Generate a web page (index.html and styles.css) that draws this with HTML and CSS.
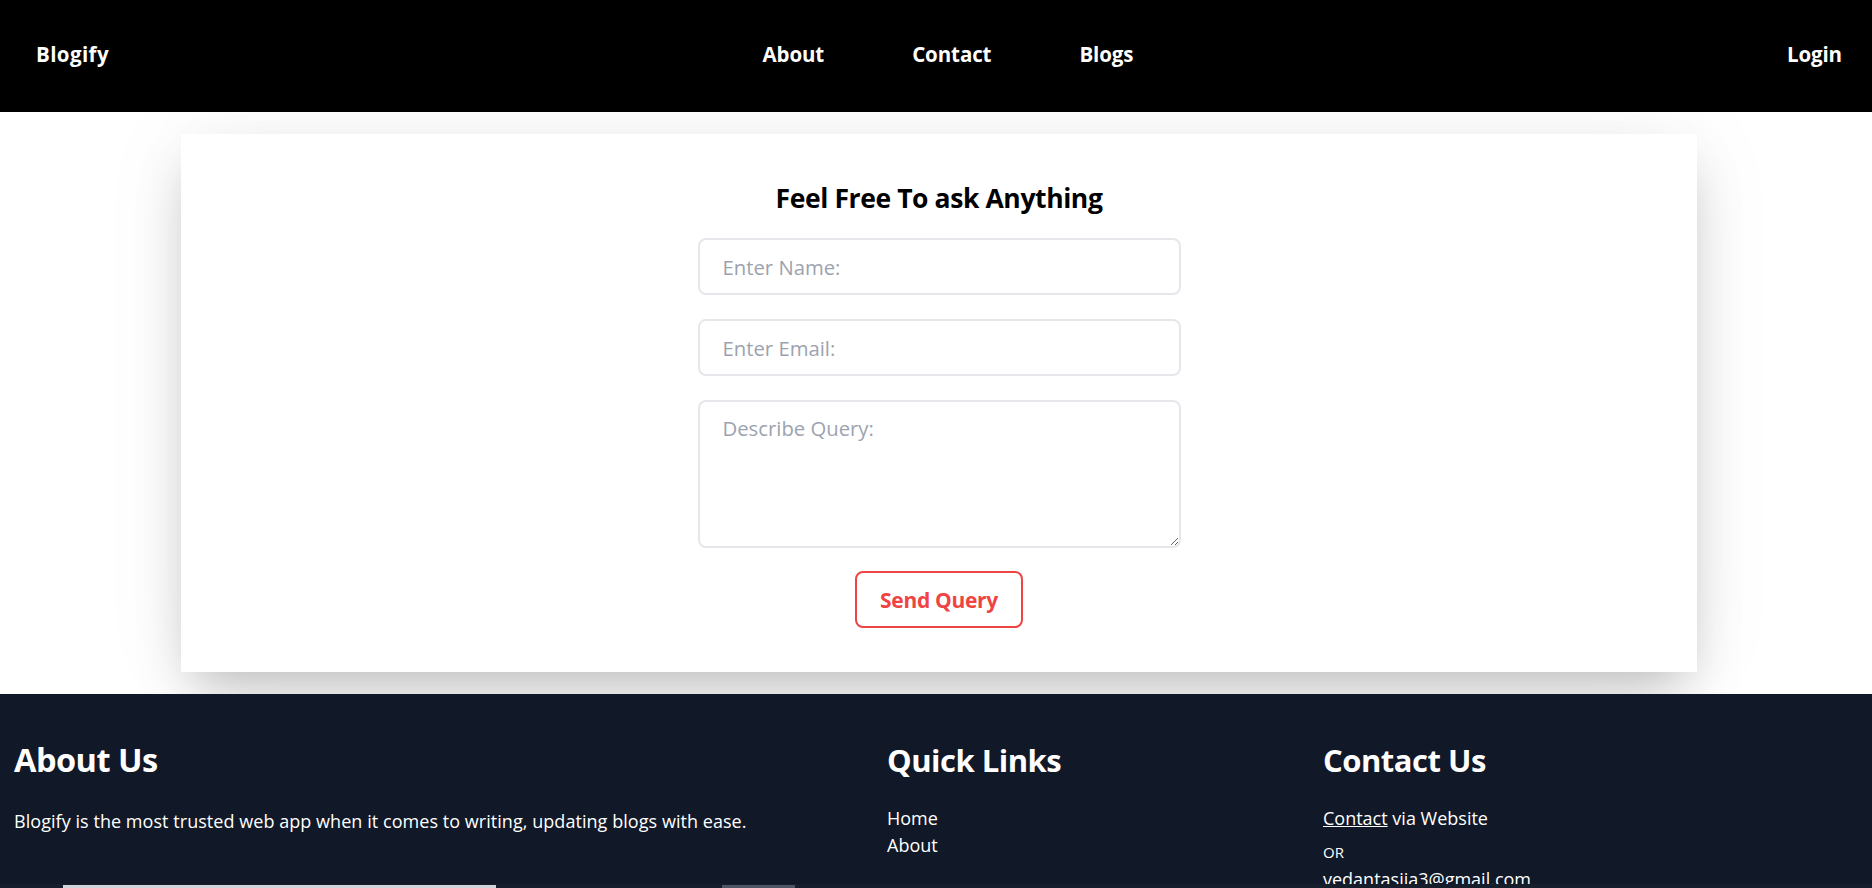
FILE: index.html
```html
<!DOCTYPE html>
<html lang="en">
<head>
<meta charset="utf-8">
<title>Blogify - Contact</title>
<link rel="stylesheet" href="styles.css">
</head>
<body>
<header class="topbar">
  <a class="brand" href="#">Blogify</a>
  <nav class="nav">
    <a href="#">About</a>
    <a href="#">Contact</a>
    <a href="#">Blogs</a>
  </nav>
  <a class="login" href="#">Login</a>
</header>

<main class="page">
  <section class="card">
    <h2 class="card-title">Feel Free To ask Anything</h2>
    <form class="query-form">
      <input class="field" type="text" placeholder="Enter Name:">
      <input class="field" type="email" placeholder="Enter Email:">
      <textarea class="field area" placeholder="Describe Query:"></textarea>
      <button class="send" type="button">Send Query</button>
    </form>
  </section>
</main>

<footer class="footer">
  <div class="cols">
    <div class="col col-about">
      <h3>About Us</h3>
      <p class="lead">Blogify is the most trusted web app when it comes to writing, updating blogs with ease.</p>
    </div>
    <div class="col col-links">
      <h3>Quick Links</h3>
      <ul>
        <li><a href="#">Home</a></li>
        <li><a href="#">About</a></li>
      </ul>
    </div>
    <div class="col col-contact">
      <h3>Contact Us</h3>
      <p><a class="ul" href="#">Contact</a> via Website</p>
      <p class="or">OR</p>
      <p>vedantasiia3@gmail.com</p>
    </div>
  </div>
  <div class="band">
    <span class="band-input"></span>
    <span class="band-btn"></span>
  </div>
</footer>
</body>
</html>
```

FILE: styles.css
```css
* { box-sizing: border-box; }

html, body {
  margin: 0;
  padding: 0;
}

body {
  font-family: "Open Sans", "Noto Sans", "Liberation Sans", sans-serif;
  background: #ffffff;
  color: #000000;
  overflow: hidden;
}

a { color: inherit; text-decoration: none; }

/* ---------- header ---------- */
.topbar {
  height: 112px;
  background: #000000;
  color: #ffffff;
  display: flex;
  align-items: center;
  justify-content: space-between;
  padding: 0 30px 5px 36px;
  font-weight: 700;
  font-size: 20.5px;
  letter-spacing: -0.1px;
}

.brand {
  letter-spacing: 0.4px;
}

.nav {
  display: flex;
  gap: 88px;
}

/* ---------- card ---------- */
.page {
  padding: 22px 175px 22px 181px;
}

.card {
  background: #ffffff;
  padding: 46px 0 44px;
  display: flex;
  flex-direction: column;
  align-items: center;
  box-shadow: 0 25px 50px -12px rgba(0, 0, 0, 0.25), 0 0 90px rgba(0, 0, 0, 0.05);
}

.card-title {
  margin: 0 0 22px;
  font-size: 26.5px;
  line-height: 36px;
  font-weight: 700;
  letter-spacing: -0.4px;
}

.query-form {
  width: 483px;
  display: flex;
  flex-direction: column;
  align-items: center;
  gap: 24px;
}

.field {
  width: 100%;
  height: 57px;
  border: 2px solid #e5e7eb;
  border-radius: 8px;
  padding: 0 22px 0 23px;
  font-family: inherit;
  font-size: 20.3px;
  color: #111827;
  background: #ffffff;
  outline: none;
}

.field::placeholder {
  color: #9ca3af;
}

.area {
  height: 148px;
  padding: 12px 22px 12px 23px;
  resize: vertical;
  display: block;
}

.send {
  margin-top: -1px;
  height: 57px;
  padding: 0 23px;
  border: 2px solid #ef4444;
  border-radius: 8px;
  background: #ffffff;
  color: #ef4444;
  font-family: inherit;
  font-size: 21px;
  font-weight: 700;
  letter-spacing: -0.3px;
  cursor: pointer;
}

/* ---------- footer ---------- */
.footer {
  background: #111827;
  color: #ffffff;
  padding-top: 46px;
}

.cols {
  display: grid;
  grid-template-columns: 873px 436px 1fr;
  padding-left: 14px;
  height: 144px;
}

.col h3 {
  margin: 0 0 25px;
  font-size: 31px;
  line-height: 40px;
  font-weight: 700;
  letter-spacing: -0.5px;
}

.col-about h3 {
  font-size: 32.5px;
}

.col p {
  margin: 0;
  font-size: 18px;
  line-height: 27px;
}

.col .lead {
  padding-top: 3px;
  letter-spacing: 0.05px;
}

.col ul {
  list-style: none;
  margin: 0;
  padding: 0;
  font-size: 18px;
  line-height: 27px;
}

.ul { text-decoration: underline; }

.col .or {
  font-size: 15px;
  line-height: 24px;
  margin: 8px 0 2px;
}

.band {
  position: relative;
  height: 60px;
  background: #161e2b;
  display: flex;
  align-items: flex-start;
  gap: 226px;
  padding: 1px 0 0 63px;
}

.band-input {
  width: 433px;
  height: 40px;
  background: #d1d5db;
}

.band-btn {
  width: 73px;
  height: 40px;
  background: #4b5563;
}
```
